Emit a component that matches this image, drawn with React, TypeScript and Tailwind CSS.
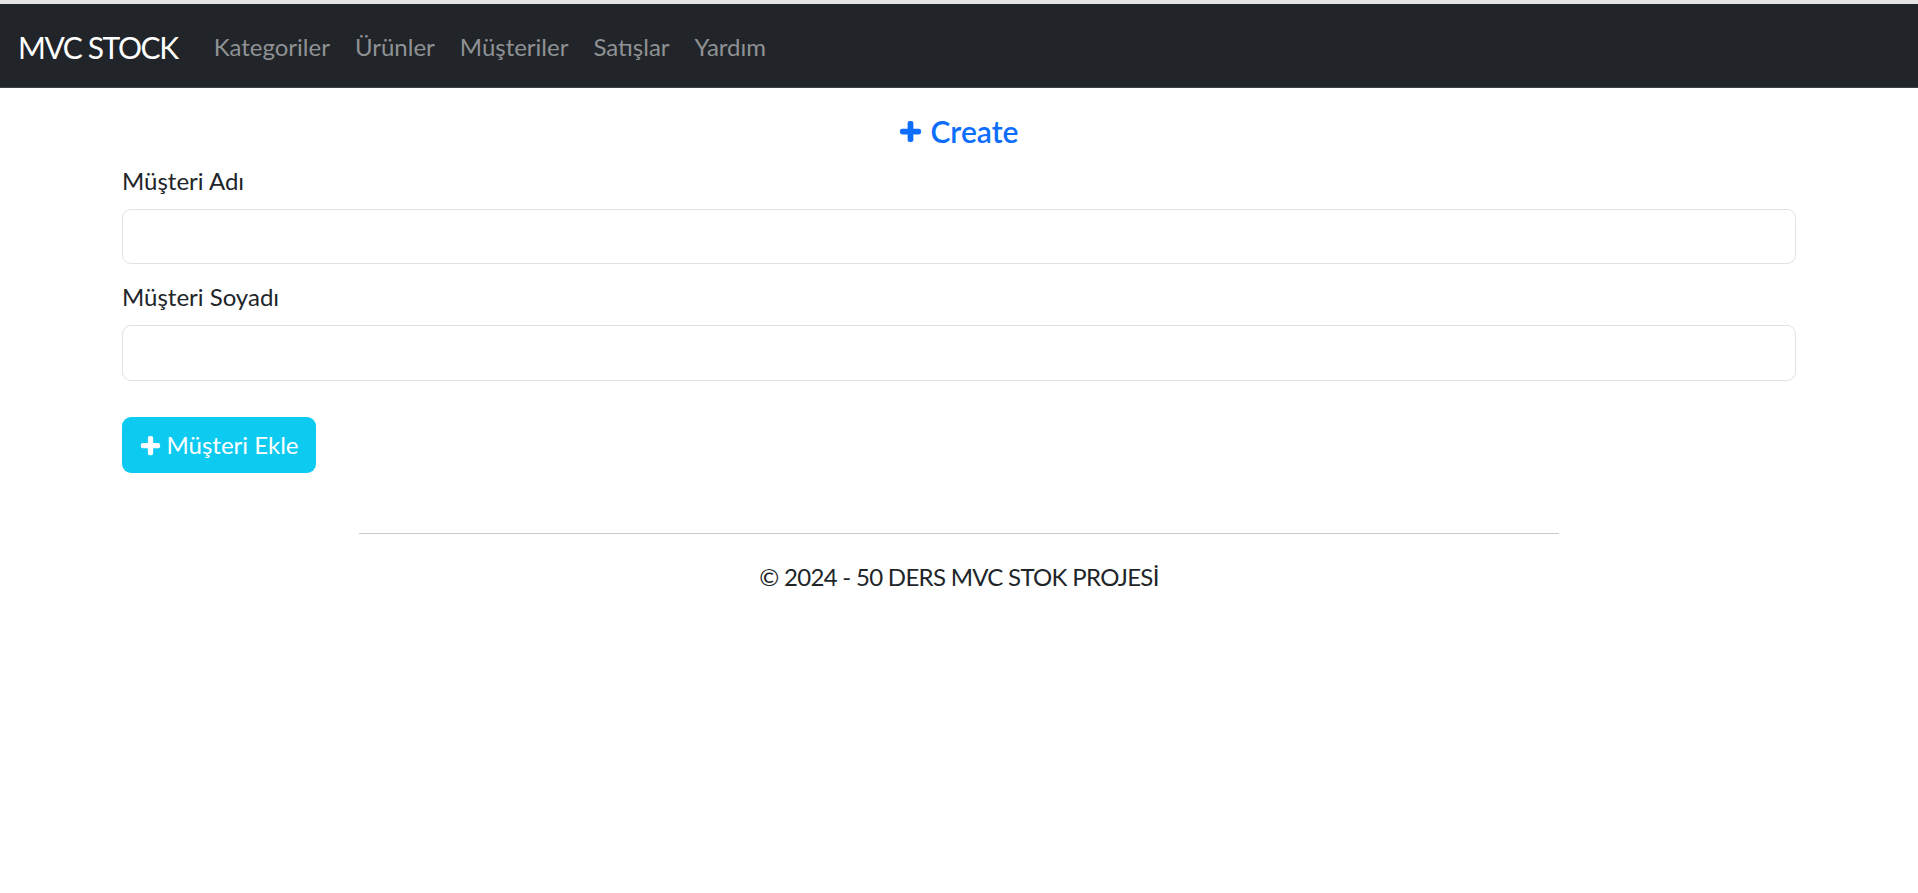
import React from "react";

const PlusIcon = ({ className }: { className?: string }) => (
  <svg viewBox="0 0 24 24" className={className} fill="currentColor" aria-hidden="true">
    <rect x="9" y="1" width="6" height="22" rx="2.2" />
    <rect x="1" y="9" width="22" height="6" rx="2.2" />
  </svg>
);

const navLinks = ["Kategoriler", "Ürünler", "Müşteriler", "Satışlar", "Yardım"];

export default function App() {
  return (
    <div
      className="min-h-screen bg-white text-[#212529]"
      style={{ fontFamily: '"Segoe UI", Lato, "Noto Sans", sans-serif' }}
    >
      <div className="h-[4px] bg-[#e4e4e4]" />

      {/* Navbar */}
      <nav className="h-[84px] bg-[#212529] border-b border-[#3b4046] flex items-center pl-[18px] pt-[2px]">
        <a className="text-[30px] leading-[36px] tracking-[-1.4px] text-white mr-[36px]">MVC STOCK</a>
        <ul className="flex items-center gap-[25px] text-[24px] leading-[36px] text-[#8f9194]">
          {navLinks.map((l) => (
            <li key={l}>
              <a>{l}</a>
            </li>
          ))}
        </ul>
      </nav>

      {/* Form */}
      <main className="px-[122px]">
        <h3 className="mt-[25px] flex items-center justify-center gap-[8px] text-[30px] leading-[36px] font-semibold text-[#0d6efd]">
          <PlusIcon className="w-[23px] h-[23px]" />
          Create
        </h3>

        <div className="mt-[14px]">
          <label className="block text-[24px] leading-[36px] mb-[10px]">Müşteri Adı</label>
          <input
            type="text"
            className="block w-full h-[55px] border border-[#dee2e6] rounded-[9px] px-[18px] text-[24px] outline-none"
          />
        </div>

        <div className="mt-[15px]">
          <label className="block text-[24px] leading-[36px] mb-[10px]">Müşteri Soyadı</label>
          <input
            type="text"
            className="block w-full h-[56px] border border-[#dee2e6] rounded-[9px] px-[18px] text-[24px] outline-none"
          />
        </div>

        <button className="mt-[36px] h-[56px] w-[194px] rounded-[9px] bg-[#0dcaf0] text-white text-[24px] leading-[36px] flex items-center justify-center gap-[6px]">
          <PlusIcon className="w-[21px] h-[21px]" />
          Müşteri Ekle
        </button>
      </main>

      {/* Footer */}
      <footer className="w-[1200px] mx-auto mt-[60px]">
        <hr className="border-0 border-t border-[#c8c8c8]" />
        <p className="mt-[25px] text-center text-[24px] leading-[36px] tracking-[-0.7px]">
          © 2024 - 50 DERS MVC STOK PROJESİ
        </p>
      </footer>
    </div>
  );
}
